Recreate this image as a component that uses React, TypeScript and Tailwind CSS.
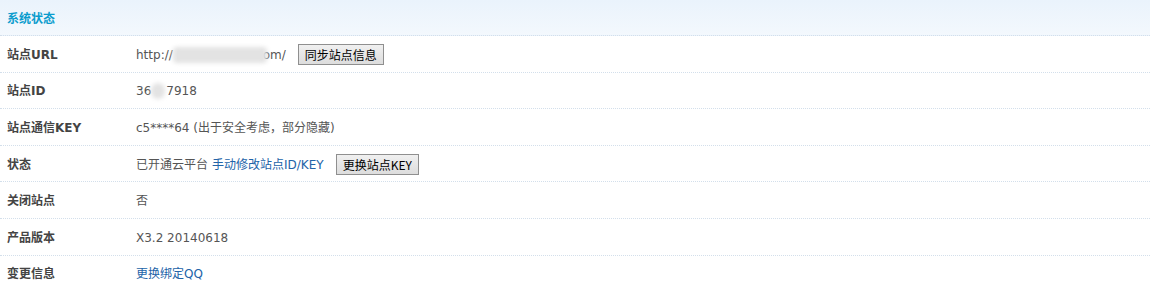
const font = 'font-["DejaVu_Sans","Noto_Sans_CJK_SC",sans-serif]';

function Btn({ children }: { children: React.ReactNode }) {
    return (
        <button className="ml-3 h-[21px] px-[6px] border border-[#8f8f8f] bg-gradient-to-b from-[#f0f0f0] to-[#dddddd] text-[12px] leading-[19px] text-black font-['Noto_Sans_CJK_SC',sans-serif]">
            {children}
        </button>
    );
}

export default function App() {
    const rows: { label: string; value: React.ReactNode }[] = [
        {
            label: '站点URL',
            value: (
                <div className="flex items-center">
                    <span>http://</span>
                    <span className="relative z-10 -mr-[4px] inline-block w-[94px] h-[16px] bg-[#e3e3e3] blur-[2px] rounded-sm"></span>
                    <span>om/</span>
                    <Btn>同步站点信息</Btn>
                </div>
            ),
        },
        {
            label: '站点ID',
            value: (
                <div className="flex items-center">
                    <span>36</span>
                    <span className="inline-block w-[14px] h-[16px] bg-[#e3e3e3] blur-[2px] rounded-full"></span>
                    <span className="ml-[1px]">7918</span>
                </div>
            ),
        },
        { label: '站点通信KEY', value: <span>c5****64 (出于安全考虑，部分隐藏)</span> },
        {
            label: '状态',
            value: (
                <div className="flex items-center">
                    <span>已开通云平台</span>
                    <a className="ml-1 text-[#2263a8]">手动修改站点ID/KEY</a>
                    <Btn>更换站点KEY</Btn>
                </div>
            ),
        },
        { label: '关闭站点', value: <span>否</span> },
        { label: '产品版本', value: <span>X3.2 20140618</span> },
        { label: '变更信息', value: <a className="text-[#2263a8]">更换绑定QQ</a> },
    ];

    return (
        <div className={`w-[1154px] h-[284px] overflow-hidden bg-white ${font} text-[12px] text-[#555]`}>
            <div className="w-[1150px]">
                <div className="h-[36px] flex items-center pl-[7px] bg-gradient-to-b from-[#eaf3fc] to-[#f3f8fd] border-b border-dotted border-[#d3dfeb]">
                    <span className="font-bold text-[#0a9ccd] font-['Noto_Sans_CJK_SC',sans-serif]">系统状态</span>
                </div>
                {rows.map((row, i) => (
                    <div key={i} className="h-[36.6px] pt-[2px] flex items-center border-b border-dotted border-[#d3dfeb]">
                        <div className="w-[136px] pl-[7px] font-bold text-[#444]">{row.label}</div>
                        <div className="flex-1">{row.value}</div>
                    </div>
                ))}
            </div>
        </div>
    );
}
